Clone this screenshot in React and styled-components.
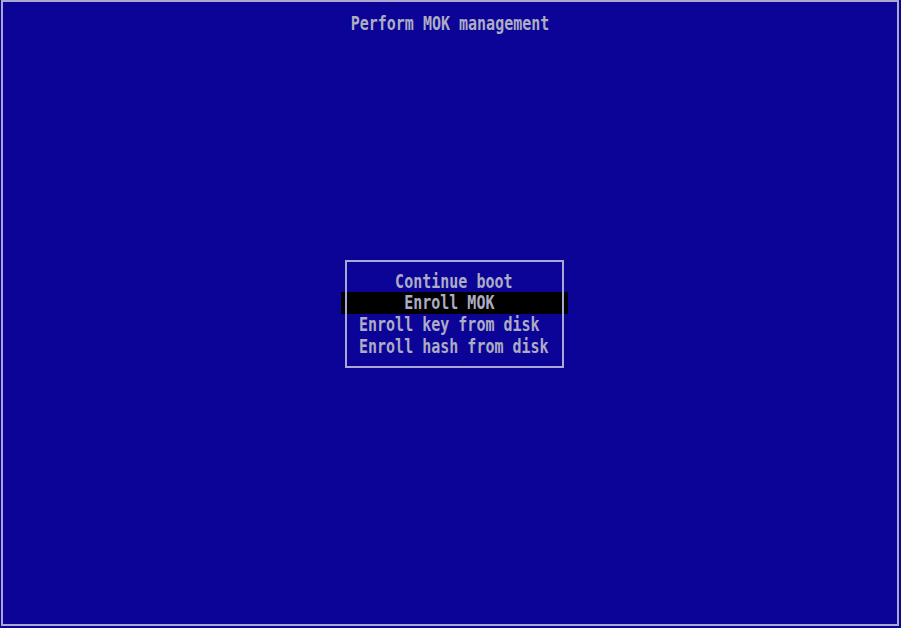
import React from "react";
import styled, { createGlobalStyle } from "styled-components";

const BG = "rgb(12, 4, 150)";
const FG = "rgb(172, 172, 196)";
const LINE = "rgb(168, 168, 210)";

const Global = createGlobalStyle`
  html, body {
    margin: 0;
    padding: 0;
    background: ${BG};
    overflow: hidden;
  }
  body {
    font-family: "DejaVu Sans Mono", "Liberation Mono", monospace;
  }
`;

const Screen = styled.div`
  width: 901px;
  height: 628px;
  background: ${BG};
  padding: 0 2px 2px 1px;
  box-sizing: border-box;
`;

const Frame = styled.div`
  height: 626px;
  box-sizing: border-box;
  border: 2px solid ${LINE};
  display: flex;
  flex-direction: column;
  padding-top: 10px;
`;

const Text = styled.span`
  display: inline-block;
  white-space: pre;
  font-family: "DejaVu Sans Mono", "Liberation Mono", monospace;
  font-size: 15px;
  font-weight: bold;
  color: ${FG};
  transform: scaleY(1.3);
`;

const Title = styled.div`
  height: 22px;
  line-height: 22px;
  text-align: center;
`;

const MenuBox = styled.div`
  align-self: flex-start;
  margin: 226px 0 0 342px;
  width: 219px;
  box-sizing: border-box;
  border: 2px solid ${LINE};
  padding: 8.5px 0 8.7px;
  display: flex;
  flex-direction: column;
`;

const Row = styled.div`
  height: 21.7px;
  line-height: 21.7px;
  padding-left: ${(p) => 12 + p.$indent * 9.03}px;
  margin: 0 ${(p) => (p.$selected ? "-6px" : "0")};
  ${(p) =>
    p.$selected &&
    `
    padding-left: ${18 + p.$indent * 9.03}px;
    background: linear-gradient(to right,
      #000 0 4px,
      ${LINE} 4px 6px,
      #000 6px 221px,
      ${LINE} 221px 223px,
      #000 223px);
  `}
`;

const items = [
  "Continue boot",
  "Enroll MOK",
  "Enroll key from disk",
  "Enroll hash from disk",
];
const WIDTH = 21;

export default function App() {
  return (
    <>
      <Global />
      <Screen>
        <Frame>
          <Title>
            <Text>Perform MOK management</Text>
          </Title>
          <MenuBox>
            {items.map((label, i) => (
              <Row
                key={label}
                $selected={i === 1}
                $indent={Math.floor((WIDTH - label.length) / 2)}
              >
                <Text>{label}</Text>
              </Row>
            ))}
          </MenuBox>
        </Frame>
      </Screen>
    </>
  );
}
